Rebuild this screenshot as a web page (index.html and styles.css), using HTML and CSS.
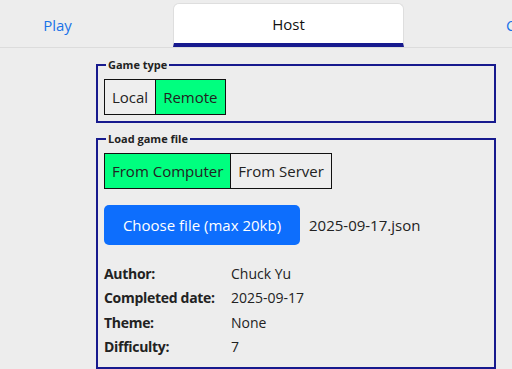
FILE: index.html
```html
<!DOCTYPE html>
<html lang="en">
<head>
    <meta charset="UTF-8">
    <meta name="viewport" content="width=device-width, initial-scale=1.0">
    <title>Host game</title>
    <link rel="stylesheet" href="styles.css">
</head>
<body>
    <nav class="tabs">
        <a class="tab">Play</a>
        <a class="tab active">Host</a>
        <a class="tab">Create</a>
    </nav>

    <main class="content">
        <fieldset class="group">
            <legend>Game type</legend>
            <div class="toggle">
                <button class="opt">Local</button>
                <button class="opt on">Remote</button>
            </div>
        </fieldset>

        <fieldset class="group">
            <legend>Load game file</legend>
            <div class="toggle">
                <button class="opt on">From Computer</button>
                <button class="opt">From Server</button>
            </div>
            <div class="file-row">
                <button class="choose">Choose file (max 20kb)</button>
                <span class="file-name">2025-09-17.json</span>
            </div>
            <div class="info">
                <span class="key">Author:</span><span>Chuck Yu</span>
                <span class="key">Completed date:</span><span>2025-09-17</span>
                <span class="key">Theme:</span><span>None</span>
                <span class="key">Difficulty:</span><span>7</span>
            </div>
        </fieldset>
    </main>
</body>
</html>
```

FILE: styles.css
```css
body {
    font-family: "Open Sans", Lato, sans-serif;
    background-color: #ededed;
    color: #222;
    margin: 0;
    overflow: hidden;
}
.tabs {
    display: flex;
    height: 47px;
    border-bottom: 1px solid #dcdcdc;
    margin-left: -58px;
    white-space: nowrap;
}
.tab {
    flex: 0 0 231px;
    display: flex;
    align-items: center;
    justify-content: center;
    font-size: 15px;
    color: #1a73e8;
    margin-top: 3px;
    box-sizing: border-box;
}
.tab:last-child {
    justify-content: flex-start;
    padding-left: 102px;
}
.tab.active {
    background-color: white;
    color: #111;
    border: 1px solid #dedede;
    border-bottom: 4px solid #171a8e;
    border-radius: 6px 6px 0 0;
}
.content {
    margin-left: 96px;
    width: 400px;
    padding-top: 9px;
}
.group {
    border: 2px solid #171a8e;
    margin: 0 0 8px 0;
    padding: 7px 6px 6px 6px;
}
.group + .group {
    padding-bottom: 10px;
}
legend {
    font-size: 11px;
    font-weight: bold;
    padding: 0 2px;
    margin-left: 2px;
}
.toggle {
    display: flex;
}
.opt {
    font-family: inherit;
    font-size: 15px;
    color: #222;
    background-color: #eeeeee;
    border: 1px solid #111;
    padding: 0 7px;
    height: 36px;
    margin: 0;
}
.opt + .opt {
    border-left: none;
}
.opt.on {
    background-color: #00ff7f;
}
.file-row {
    display: flex;
    align-items: center;
    margin-top: 16px;
}
.choose {
    font-family: inherit;
    font-size: 15px;
    color: white;
    background-color: #0d6efd;
    border: none;
    border-radius: 5px;
    width: 196px;
    height: 40px;
}
.file-name {
    font-size: 15px;
    margin-left: 9px;
}
.info {
    display: grid;
    grid-template-columns: 127px auto;
    row-gap: 4.3px;
    margin-top: 19px;
    font-size: 14px;
    line-height: 20px;
}
.key {
    font-weight: bold;
    letter-spacing: -0.3px;
}
```
